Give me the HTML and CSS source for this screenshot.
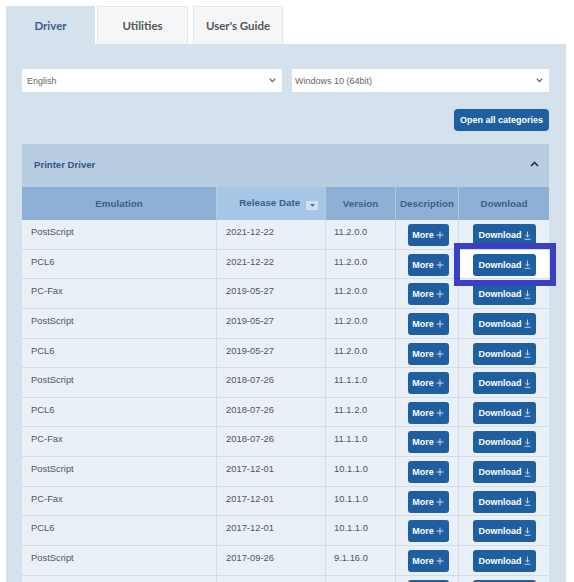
FILE: index.html
```html
<!DOCTYPE html>
<html lang="en">
<head>
<meta charset="utf-8">
<title>Driver downloads</title>
<link rel="stylesheet" href="styles.css">
</head>
<body>
<div class="page">
  <div class="tabs">
    <div class="tab tab-active">Driver</div>
    <div class="tab tab-utilities">Utilities</div>
    <div class="tab tab-guide">User's Guide</div>
  </div>
  <div class="panel">
    <div class="selects">
      <div class="select select-lang">
        <span>English</span>
        <svg class="chev" width="7" height="5" viewBox="0 0 7 5"><polyline points="0.8,0.8 3.5,3.6 6.2,0.8" fill="none" stroke="#666" stroke-width="1.3"/></svg>
      </div>
      <div class="select select-os">
        <span>Windows 10 (64bit)</span>
        <svg class="chev" width="7" height="5" viewBox="0 0 7 5"><polyline points="0.8,0.8 3.5,3.6 6.2,0.8" fill="none" stroke="#666" stroke-width="1.3"/></svg>
      </div>
    </div>
    <div class="actions">
      <button class="btn btn-open">Open all categories</button>
    </div>
    <div class="category">
      <div class="category-head">
        <span>Printer Driver</span>
        <svg width="9" height="6" viewBox="0 0 9 6"><polyline points="1,5 4.5,1.5 8,5" fill="none" stroke="#2b3340" stroke-width="1.7"/></svg>
      </div>
      <table class="drivers">
        <colgroup>
          <col class="c-emu"><col class="c-date"><col class="c-ver"><col class="c-desc"><col class="c-dl">
        </colgroup>
        <thead>
          <tr>
            <th>Emulation</th>
            <th class="sorted">Release Date <span class="sort"><svg width="5" height="3" viewBox="0 0 5 3"><polygon points="0,0 5,0 2.5,3" fill="#4d7099"/></svg></span></th>
            <th>Version</th>
            <th>Description</th>
            <th>Download</th>
          </tr>
        </thead>
        <tbody id="rows"></tbody>
      </table>
    </div>
  </div>
</div>
<script>
  var data = [
    ["PostScript","2021-12-22","11.2.0.0"],
    ["PCL6","2021-12-22","11.2.0.0"],
    ["PC-Fax","2019-05-27","11.2.0.0"],
    ["PostScript","2019-05-27","11.2.0.0"],
    ["PCL6","2019-05-27","11.2.0.0"],
    ["PostScript","2018-07-26","11.1.1.0"],
    ["PCL6","2018-07-26","11.1.2.0"],
    ["PC-Fax","2018-07-26","11.1.1.0"],
    ["PostScript","2017-12-01","10.1.1.0"],
    ["PC-Fax","2017-12-01","10.1.1.0"],
    ["PCL6","2017-12-01","10.1.1.0"],
    ["PostScript","2017-09-26","9.1.16.0"],
    ["","",""]
  ];
  var plus = '<svg class="ico" width="8" height="8" viewBox="0 0 8 8"><path d="M4 0.5V7.5M0.5 4H7.5" stroke="#c9dbee" stroke-width="1" fill="none"/></svg>';
  var dl = '<svg class="ico" width="7" height="9" viewBox="0 0 7 9"><path d="M3.5 0.5V6M1.2 3.8L3.5 6.1L5.8 3.8M0.5 8.3H6.5" stroke="#bcd2ea" stroke-width="1" fill="none"/></svg>';
  var html = "";
  data.forEach(function (r, i) {
    var focus = i === 1;
    var last = r[0] === "";
    html += '<tr><td>' + r[0] + '</td><td>' + r[1] + '</td><td>' + r[2] + '</td>' +
      '<td class="act"><button class="btn btn-more">' + (last ? '' : 'More' + plus) + '</button></td>' +
      '<td class="act' + (focus ? ' focus' : '') + '">' + (focus ? '<span class="annot"></span>' : '') +
      '<button class="btn btn-dl">' + (last ? '' : 'Download' + dl) + '</button></td></tr>';
  });
  document.getElementById("rows").innerHTML = html;
</script>
</body>
</html>
```
FILE: styles.css
```css
html, body {
  margin: 0;
  padding: 0;
  overflow: hidden;
  background: #ffffff;
}

body {
  font-family: "Liberation Sans", Arial, sans-serif;
  color: #555;
}

.page {
  padding: 6px 8px 0 6px;
}

.tabs {
  display: flex;
  height: 38px;
}

.tab {
  box-sizing: border-box;
  display: flex;
  align-items: center;
  justify-content: center;
  font-family: Lato, "Liberation Sans", sans-serif;
  font-weight: bold;
  font-size: 11.5px;
  color: #555;
  background: #f5f6f8;
  border: 1px solid #e3e7eb;
  border-bottom: none;
}

.tab-active {
  width: 89px;
  background: #d5e1ed;
  border: none;
  color: #3c5f87;
}

.tab-utilities {
  width: 91px;
  margin-left: 2px;
}

.tab-guide {
  width: 90px;
  margin-left: 5px;
}

.panel {
  background: #d5e1ed;
  padding: 25px 17px 0 16px;
  height: 600px;
}

.selects {
  display: flex;
  gap: 10px;
}

.select {
  box-sizing: border-box;
  height: 23px;
  background: #fff;
  display: flex;
  align-items: center;
  justify-content: space-between;
  padding: 0 6px 0 5px;
  font-size: 9px;
  color: #666;
}

.select-lang {
  width: 260px;
}

.select-os {
  flex: 1;
  padding-left: 3px;
}

.actions {
  display: flex;
  justify-content: flex-end;
  margin-top: 17px;
}

.btn {
  font-family: "Liberation Sans", Arial, sans-serif;
  font-weight: bold;
  font-size: 9px;
  color: #fff;
  background: #1f5f9f;
  border: none;
  border-radius: 3px;
  padding: 0;
  display: inline-flex;
  align-items: center;
  justify-content: center;
  cursor: pointer;
}

.btn-open {
  width: 95px;
  height: 22px;
  border-radius: 4px;
}

.category {
  margin-top: 13px;
}

.category-head {
  height: 43px;
  background: #b9cde2;
  display: flex;
  align-items: center;
  justify-content: space-between;
  padding: 0 10px 3px 12px;
  box-sizing: border-box;
  font-weight: bold;
  font-size: 9.6px;
  color: #2f5985;
}

.drivers {
  width: 527px;
  table-layout: fixed;
  border-collapse: separate;
  border-spacing: 0;
}

.c-emu { width: 195px; }
.c-date { width: 109px; }
.c-ver { width: 70px; }
.c-desc { width: 63px; }
.c-dl { width: 90px; }

.drivers thead tr {
  height: 33px;
}

.drivers th {
  background: #8db1d5;
  color: #3b5f88;
  font-size: 9.8px;
  font-weight: bold;
  text-align: center;
  padding: 0;
  border-right: 1px solid #b3cbe3;
}

.drivers th:last-child,
.drivers td:last-child {
  border-right: none;
}

.drivers th.sorted {
  background: #a6c6e5;
  text-align: right;
  padding-right: 7px;
}

.sort {
  display: inline-flex;
  align-items: center;
  justify-content: center;
  width: 12px;
  height: 9px;
  margin-left: 3px;
  background: #d2e1f0;
  vertical-align: -1px;
}

.drivers tbody tr {
  height: 29.64px;
}

.drivers td {
  background: #eaf0f7;
  border-right: 1px solid #d2dce7;
  border-bottom: 1px solid #d2dce7;
  font-size: 9.4px;
  color: #555;
  vertical-align: top;
  padding: 6px 0 0 9px;
  line-height: 11px;
}

.drivers td:nth-child(3) {
  padding-left: 8px;
}

.drivers td.act {
  padding: 4px 0 0 0;
  text-align: center;
}

.btn-more {
  width: 41px;
  height: 22px;
  margin-left: 2px;
}

.btn-dl {
  width: 63px;
  height: 22px;
  margin-left: 1px;
}

.ico {
  margin-left: 2px;
}

.drivers td.focus {
  position: relative;
  background: #ffffff;
}

.annot {
  position: absolute;
  left: -5px;
  right: -7px;
  top: -7px;
  bottom: -8px;
  border: 6px solid #3b3fc2;
  z-index: 2;
  pointer-events: none;
}
```
